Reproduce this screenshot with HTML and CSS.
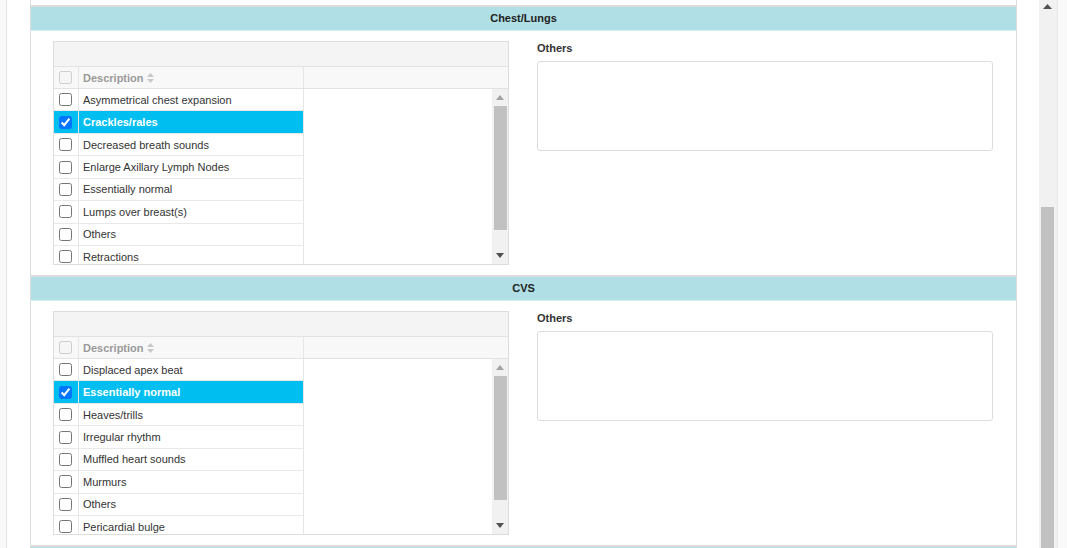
FILE: index.html
```html
<!DOCTYPE html>
<html>
<head>
<meta charset="utf-8">
<link rel="stylesheet" href="styles.css">
</head>
<body>
<div class="app">
  <div class="main">
    <div class="panel">
      <div class="stub"></div>

      <section class="section">
        <div class="sec-head">Chest/Lungs</div>
        <div class="sec-body">
          <div class="grid">
            <div class="toolbar"></div>
            <div class="ghead">
              <div class="cb-cell"><input type="checkbox" disabled></div>
              <div class="desc-cell hdr">Description <svg class="sort" width="7" height="10" viewBox="0 0 7 10"><path d="M3.5 0L7 4H0z" fill="#c8c8c8"/><path d="M0 6h7L3.5 10z" fill="#c8c8c8"/></svg></div>
              <div class="rest"></div>
            </div>
            <div class="gbody">
              <div class="rows">
                <div class="row"><div class="cb-cell"><input type="checkbox"></div><div class="desc-cell">Asymmetrical chest expansion</div></div>
                <div class="row sel"><div class="cb-cell"><input type="checkbox" checked></div><div class="desc-cell">Crackles/rales</div></div>
                <div class="row"><div class="cb-cell"><input type="checkbox"></div><div class="desc-cell">Decreased breath sounds</div></div>
                <div class="row"><div class="cb-cell"><input type="checkbox"></div><div class="desc-cell">Enlarge Axillary Lymph Nodes</div></div>
                <div class="row"><div class="cb-cell"><input type="checkbox"></div><div class="desc-cell">Essentially normal</div></div>
                <div class="row"><div class="cb-cell"><input type="checkbox"></div><div class="desc-cell">Lumps over breast(s)</div></div>
                <div class="row"><div class="cb-cell"><input type="checkbox"></div><div class="desc-cell">Others</div></div>
                <div class="row"><div class="cb-cell"><input type="checkbox"></div><div class="desc-cell">Retractions</div></div>
              </div>
              <div class="fill"></div>
              <div class="vscroll">
                <div class="arrow"><svg width="8" height="5" viewBox="0 0 8 5"><path d="M4 0L8 5H0z" fill="#a3a3a3"/></svg></div>
                <div class="thumb"></div>
                <div class="arrow down"><svg width="8" height="5" viewBox="0 0 8 5"><path d="M0 0h8L4 5z" fill="#505050"/></svg></div>
              </div>
            </div>
          </div>
          <div class="others">
            <label class="lbl">Others</label>
            <textarea class="ta"></textarea>
          </div>
        </div>
      </section>

      <section class="section">
        <div class="sec-head">CVS</div>
        <div class="sec-body">
          <div class="grid">
            <div class="toolbar"></div>
            <div class="ghead">
              <div class="cb-cell"><input type="checkbox" disabled></div>
              <div class="desc-cell hdr">Description <svg class="sort" width="7" height="10" viewBox="0 0 7 10"><path d="M3.5 0L7 4H0z" fill="#c8c8c8"/><path d="M0 6h7L3.5 10z" fill="#c8c8c8"/></svg></div>
              <div class="rest"></div>
            </div>
            <div class="gbody">
              <div class="rows">
                <div class="row"><div class="cb-cell"><input type="checkbox"></div><div class="desc-cell">Displaced apex beat</div></div>
                <div class="row sel"><div class="cb-cell"><input type="checkbox" checked></div><div class="desc-cell">Essentially normal</div></div>
                <div class="row"><div class="cb-cell"><input type="checkbox"></div><div class="desc-cell">Heaves/trills</div></div>
                <div class="row"><div class="cb-cell"><input type="checkbox"></div><div class="desc-cell">Irregular rhythm</div></div>
                <div class="row"><div class="cb-cell"><input type="checkbox"></div><div class="desc-cell">Muffled heart sounds</div></div>
                <div class="row"><div class="cb-cell"><input type="checkbox"></div><div class="desc-cell">Murmurs</div></div>
                <div class="row"><div class="cb-cell"><input type="checkbox"></div><div class="desc-cell">Others</div></div>
                <div class="row"><div class="cb-cell"><input type="checkbox"></div><div class="desc-cell">Pericardial bulge</div></div>
              </div>
              <div class="fill"></div>
              <div class="vscroll">
                <div class="arrow"><svg width="8" height="5" viewBox="0 0 8 5"><path d="M4 0L8 5H0z" fill="#a3a3a3"/></svg></div>
                <div class="thumb"></div>
                <div class="arrow down"><svg width="8" height="5" viewBox="0 0 8 5"><path d="M0 0h8L4 5z" fill="#505050"/></svg></div>
              </div>
            </div>
          </div>
          <div class="others">
            <label class="lbl">Others</label>
            <textarea class="ta"></textarea>
          </div>
        </div>
      </section>

      <section class="section">
        <div class="sec-head"></div>
      </section>
    </div>
  </div>
  <div class="pagebar">
    <div class="parrow"><svg width="9" height="5" viewBox="0 0 9 5"><path d="M4.5 0L9 5H0z" fill="#505050"/></svg></div>
    <div class="pthumb"></div>
  </div>
</div>
</body>
</html>
```

FILE: styles.css
```css
* { box-sizing: border-box; }
html, body { margin: 0; padding: 0; }
body {
  background: #f9f9f9;
  font-family: "Liberation Sans", Arial, sans-serif;
  font-size: 11px;
  color: #333;
  width: 1067px;
  height: 548px;
  overflow: hidden;
}
.app {
  display: flex;
  height: 548px;
  overflow: hidden;
}
.main {
  margin-left: 6px;
  width: 1033px;
  border-left: 1px solid #e6e6e6;
  background: #fff;
  padding: 0 22px 0 23px;
  overflow: hidden;
}
.panel {
  border-left: 1px solid #dddddd;
  border-right: 1px solid #dddddd;
  background: #fff;
}
.stub { height: 5px; }
.section {
  border-top: 2px solid #dcdcdc;
}
.sec-head {
  height: 24px;
  line-height: 23px;
  background: #b0dfe5;
  border-bottom: 1px solid #d4eef1;
  text-align: center;
  font-weight: bold;
  color: #222;
}
.sec-body {
  display: flex;
  gap: 28px;
  padding: 10px 23px 10px 22px;
}
.grid {
  width: 456px;
  height: 224px;
  border: 1px solid #dddddd;
  display: flex;
  flex-direction: column;
  background: #fff;
}
.toolbar {
  height: 25px;
  background: #f4f4f4;
  border-bottom: 1px solid #e2e2e2;
}
.ghead {
  height: 22px;
  display: flex;
  background: #f8f8f8;
  border-bottom: 1px solid #e2e2e2;
}
.cb-cell {
  width: 25px;
  flex: none;
  border-right: 1px solid #e6e6e6;
  display: flex;
  align-items: center;
  padding-left: 5px;
}
.cb-cell input {
  margin: 0;
  width: 13px;
  height: 13px;
}
.desc-cell {
  width: 225px;
  flex: none;
  border-right: 1px solid #e6e6e6;
  display: flex;
  align-items: center;
  padding-left: 4px;
  white-space: nowrap;
}
.hdr {
  color: #9a9a9a;
  font-weight: bold;
  gap: 3px;
}
.sort { display: block; }
.rest { flex: 1; }
.gbody {
  flex: 1;
  display: flex;
  overflow: hidden;
  min-height: 0;
}
.rows {
  width: 250px;
  flex: none;
  overflow: hidden;
}
.row {
  height: 22.45px;
  display: flex;
  border-bottom: 1px solid #e9e9e9;
}
.row .desc-cell { color: #333; }
.row.sel { background: #00bff0; }
.row.sel .desc-cell { color: #fff; font-weight: bold; }
.fill { flex: 1; }
.vscroll {
  width: 16px;
  flex: none;
  background: #f1f1f1;
  display: flex;
  flex-direction: column;
}
.arrow {
  height: 17px;
  display: flex;
  align-items: center;
  justify-content: center;
  flex: none;
}
.arrow.down { margin-top: auto; }
.thumb {
  height: 124px;
  margin: 0 1px 0 2px;
  background: #c1c1c1;
}
.others {
  width: 456px;
  display: flex;
  flex-direction: column;
}
.lbl {
  font-weight: bold;
  color: #333;
  line-height: 14px;
  margin-bottom: 6px;
}
.ta {
  height: 90px;
  border: 1px solid #dddddd;
  border-radius: 3px;
  resize: none;
  background: #fff;
}
.pagebar {
  width: 19px;
  flex: none;
  background: #f1f1f1;
  border-right: 1px solid #e8e8e8;
  display: flex;
  flex-direction: column;
}
.parrow {
  height: 12px;
  display: flex;
  align-items: center;
  justify-content: center;
  padding-right: 1px;
}
.pthumb {
  margin: 195px 3px 0 2px;
  flex: 1;
  background: #c1c1c1;
}
```
